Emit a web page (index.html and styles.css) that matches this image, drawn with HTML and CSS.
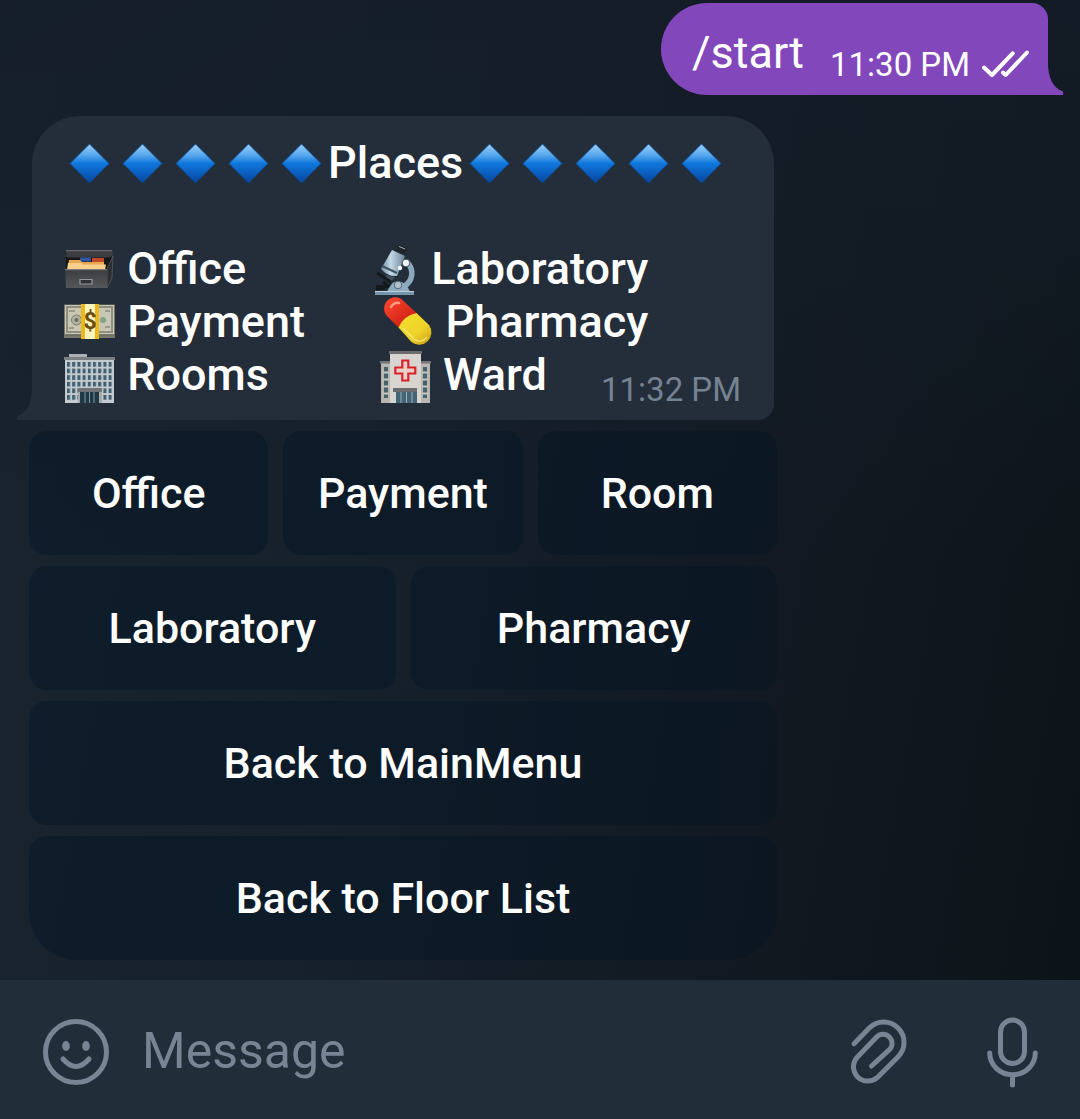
FILE: index.html
```html
<!DOCTYPE html>
<html lang="en">
<head>
<meta charset="utf-8">
<meta name="viewport" content="width=device-width, initial-scale=1">
<title>Chat</title>
<link rel="stylesheet" href="styles.css">
</head>
<body>
<svg class="sprite" aria-hidden="true">
  <defs>
    <linearGradient id="blue" x1="0" y1="0" x2="0" y2="1">
      <stop offset="0" stop-color="#9ad0fb"/><stop offset=".28" stop-color="#5aa9ee"/><stop offset=".5" stop-color="#0f77dc"/><stop offset="1" stop-color="#0745a0"/>
    </linearGradient>
    <linearGradient id="red" x1="0" y1="0" x2="1" y2="1">
      <stop offset="0" stop-color="#ff4a30"/><stop offset="1" stop-color="#c4160f"/>
    </linearGradient>
    <linearGradient id="yellow" x1="0" y1="0" x2="1" y2="1">
      <stop offset="0" stop-color="#f4e02c"/><stop offset=".6" stop-color="#eed32a"/><stop offset="1" stop-color="#c99a12"/>
    </linearGradient>
    <linearGradient id="steel" x1="0" y1="0" x2="1" y2="0">
      <stop offset="0" stop-color="#6d8aa0"/><stop offset=".4" stop-color="#c4d9e7"/><stop offset="1" stop-color="#6a8496"/>
    </linearGradient>
    <linearGradient id="box" x1="0" y1="0" x2="0" y2="1">
      <stop offset="0" stop-color="#3b3c40"/><stop offset="1" stop-color="#56575b"/>
    </linearGradient>
    <pattern id="windows" x="4" y="14" width="5.2" height="6.6" patternUnits="userSpaceOnUse">
      <rect width="3" height="4.7" fill="#41606f"/>
    </pattern>
    <symbol id="diamond" viewBox="0 0 53 53">
      <path d="M26.5 8 46 27.5 26.5 47 7 27.5z" fill="url(#blue)" stroke="#0b4a90" stroke-width=".8"/>
    </symbol>
  </defs>
</svg>

<main class="conversation">
  <article class="bubble outgoing">
    <span>/start</span>
    <time class="time">11:30 PM</time>
    <svg class="checks" viewBox="0 0 48 30" role="img" aria-label="Read"><path d="M3 18.5 11 26 31.700 4.300M22 23.500l2.700 2.500L46 3.500"/></svg>
    <svg class="tail" viewBox="0 0 17 32" aria-hidden="true"><path d="M0 0h1C1 14 6 25 15 28Q17 29 16 32H0z"/></svg>
  </article>

  <article class="bubble incoming">
    <svg class="tail" viewBox="0 0 17 32" aria-hidden="true"><path d="M17 0h-1C16 14 11 25 2 28Q0 29 1 32H17z"/></svg>
    <h1 class="line title"><svg class="emoji"><use href="#diamond"/></svg><svg class="emoji"><use href="#diamond"/></svg><svg class="emoji"><use href="#diamond"/></svg><svg class="emoji"><use href="#diamond"/></svg><svg class="emoji"><use href="#diamond"/></svg>Places<svg class="emoji"><use href="#diamond"/></svg><svg class="emoji"><use href="#diamond"/></svg><svg class="emoji"><use href="#diamond"/></svg><svg class="emoji"><use href="#diamond"/></svg><svg class="emoji"><use href="#diamond"/></svg></h1>
    <p class="line"><svg class="emoji" viewBox="0 0 53 53" aria-hidden="true">
        <path d="M3 15h46l-3 13H3z" fill="#141618"/>
        <path d="M3 8h46l1 5-4 2.500H4z" fill="#3c3d41"/><path d="M3 8h46l.5 1.200H3z" fill="#66686b"/>
        <path d="M17 15.500h11v4H17z" fill="#3255a4"/><path d="M29 16h12v4H29z" fill="#c4482a"/>
        <path d="M6 18h11l2 2h22v4H5z" fill="#e8a850"/><path d="M5 21h13l2 1.500h23l-1 5H4z" fill="#fbd08c"/>
        <path d="M44 27 50 14l-1 22-5 10z" fill="#2c2e31" stroke="#5f6165" stroke-width=".7"/><path d="M2 27h42v19H3z" fill="url(#box)"/><path d="M2 27h42v1.200H2z" fill="#77797c"/>
        <path d="M17 37.500h12v4.500H17z" fill="#303235" stroke="#97989b" stroke-width="1.200"/>
      </svg> Office           <svg class="emoji second" viewBox="0 0 53 53" aria-hidden="true">
        <path d="M40 20c7 7 7 19-4 25" fill="none" stroke="#8ca9bc" stroke-width="5.500"/>
        <path d="M31 2.500 40 6 38 12 29 9z" fill="#1e2429"/><path d="m32 4.500 6 2.500" stroke="#a5b0b8"/>
        <path d="m25 8 13 6-8 20q-9 1-16-7z" fill="url(#steel)"/><path d="m15 24 15 7" stroke="#3f5462" stroke-width="2"/>
        <path d="m19 33 9 2-4 5-7-3z" fill="#3e505d"/>
        <path d="m10 31 14 9M9 45l13-1-6-4M9 47l10-1" fill="none" stroke="#15191c" stroke-width="3"/>
        <circle cx="39" cy="21" r="3.800" fill="#f4f8fa" stroke="#40525f"/><circle cx="33" cy="26" r="2.200" fill="#f4f8fa"/>
        <path d="M20 50q3-7 7-10h8q6 4 8 10z" fill="#8fadc1"/><circle cx="31" cy="43" r="3.800" fill="#b0bfc8" stroke="#526878"/>
        <path d="M8 49h39v4H8z" fill="#7595ab"/><path d="M8 49h39v1H8z" fill="#bed1dd"/>
      </svg> Laboratory</p>
    <p class="line"><svg class="emoji" viewBox="0 0 53 53" aria-hidden="true">
        <path d="M1 9.500h51V43H1z" fill="#77776b"/><path d="M2 10h49v29H2z" fill="#c9c7b4"/>
        <path d="M4 12h45v25H4z" fill="none" stroke="#8e8f80" stroke-width="2"/>
        <circle cx="13.500" cy="25" r="5" fill="#b1b29f" stroke="#7c7f6e"/><circle cx="13.500" cy="25" r="2" fill="#636c60"/>
        <circle cx="40" cy="25" r="3" fill="#7fa387"/><path d="M42 32h5M6 16h6M42 16h5M6 33h5M1 40.500h51" stroke="#6d7065"/>
        <path d="M18 9h18v35H18z" fill="#ebb91c"/><path d="M22 9h10v35H22z" fill="#fff3bd"/>
        <text x="27" y="34" class="currency">$</text>
      </svg> Payment       <svg class="emoji second" viewBox="0 0 53 53" aria-hidden="true">
        <path d="M17.500 32.500 6.500 21.500A11 11 0 0 1 22 5.500L35.500 18z" fill="url(#red)"/>
        <path d="M35.500 18 48 30A12.300 12.300 0 0 1 30.500 47L17.500 32.500Q22 21 35.500 18z" fill="url(#yellow)"/>
        <path d="M10 12q3-5 8-4" fill="none" stroke="#ff9a82" stroke-width="2.500" stroke-linecap="round"/>
        <path d="m22 33 11 11q7 5 13-2" fill="none" stroke="#fff0a0" stroke-width="1.300" opacity=".7"/>
      </svg> Pharmacy</p>
    <div class="last-row">
      <p class="line"><svg class="emoji" viewBox="0 0 53 53" aria-hidden="true">
        <path d="M6 6h18v4H6z" fill="#adb1b4"/><path d="M2 11h49v44H2z" fill="#c4cbd0"/><path d="M1 9h51v3H1z" fill="#7c7f83"/>
        <path d="M4 14h45.500v38H4z" fill="url(#windows)"/>
        <path d="M15 41h24v14H15z" fill="#a4a9ac"/><path d="M15 40h24v4H15z" fill="#6f7375"/><path d="M17 44h19v11H17z" fill="#1e3846"/><path d="M22 44v11M26.500 44v11M31 44v11" stroke="#80969f"/>
      </svg> Rooms          <svg class="emoji second" viewBox="0 0 53 53" aria-hidden="true">
        <path d="M2 14h49v41H2z" fill="#b9b6b1"/><path d="M1 13h51v2.500H1z" fill="#737475"/>
        <path d="M5 19h4v31H5zM44 19h4v31h-4z" fill="#48626e"/><path d="M4 24.500h6m-6 7h6m-6 7h6m-6 7h6m33-21h6m-6 7h6m-6 7h6m-6 7h6" stroke="#c9c6c1" stroke-width="2"/>
        <path d="M11 5h31v50H11z" fill="#d8d5d0"/><path d="M10 3h33v3H10z" fill="#6b6c6e"/>
        <path d="M23.300 12.500h6v7h7v6h-7v7h-6v-7h-7v-6h7z" fill="#eccfcb" stroke="#d8232b" stroke-width="2.200"/>
        <path d="M14 40h24v4H14z" fill="#6a6b6c"/><path d="M17 44h21v11H17z" fill="#416577"/><path d="M22 44v11M27.500 44v11M33 44v11" stroke="#9cb0b8"/>
      </svg> Ward</p>
      <time class="time">11:32 PM</time>
    </div>
  </article>

  <div class="keyboard">
    <div class="keys"><button type="button">Office</button><button type="button">Payment</button><button type="button">Room</button></div>
    <div class="keys"><button type="button">Laboratory</button><button type="button">Pharmacy</button></div>
    <div class="keys"><button type="button">Back to MainMenu</button></div>
    <div class="keys"><button type="button">Back to Floor List</button></div>
  </div>
</main>

<form class="composer">
  <button type="button" aria-label="Emoji"><svg width="68" height="68" viewBox="0 0 68 68"><circle cx="34" cy="34" r="30.500"/><path d="M21 41q13 15 26 0"/><ellipse class="eye" cx="24" cy="28" rx="3.800" ry="5"/><ellipse class="eye" cx="44" cy="28" rx="3.800" ry="5"/></svg></button>
  <input type="text" aria-label="Message" placeholder="Message">
  <button type="button" aria-label="Attach"><svg width="68" height="72" viewBox="0 0 68 72"><path d="M10 27.700 25.300 12A20.300 20.300 0 0 1 54.100 40.700L33.400 61.400A14.300 14.300 0 0 1 13.200 41.200L32.600 21A9 9 0 0 1 45.400 33.700L27.500 50"/></svg></button>
  <button type="button" aria-label="Record voice message"><svg width="70" height="78" viewBox="0 0 70 78"><rect x="22.500" y="7" width="24" height="43.500" rx="12"/><path d="M11.700 40a22.800 21.700 0 0 0 45.600 0M34.500 61.700V72"/></svg></button>
</form>
</body>
</html>
```
FILE: styles.css
```css
* {
  box-sizing: border-box;
}

body {
  margin: 0;
  min-height: 100vh;
  display: flex;
  flex-direction: column;
  font-family: Roboto, "Liberation Sans", sans-serif;
  color: #fff;
  background:
    linear-gradient(to bottom, rgba(20, 29, 40, .8), rgba(20, 29, 40, 0) 50%),
    linear-gradient(100deg, #19242f 0%, #16212c 35%, #121922 68%, #0c1318 100%);
}

button,
input {
  font: inherit;
  color: inherit;
  border: 0;
  padding: 0;
  background: none;
}

.sprite {
  position: absolute;
  width: 0;
  height: 0;
}

.conversation {
  flex: 1;
  display: flex;
  flex-direction: column;
  align-items: flex-start;
  padding: 3px 32px 20px;
}

.bubble {
  position: relative;
  font-size: 45px;
  line-height: 53px;
}

.tail {
  position: absolute;
  bottom: 0;
  width: 17px;
  height: 32px;
}

.time {
  font-size: 33px;
  line-height: 40px;
}

.outgoing {
  align-self: flex-end;
  display: flex;
  align-items: flex-end;
  padding: 23px 19px 16px 31px;
  border-radius: 46px 16px 0 46px;
  background: #8147bb;
}

.outgoing .tail {
  right: -16px;
  fill: #8147bb;
}

.outgoing .time {
  margin: 0 11px -6px 26px;
}

.checks {
  width: 48px;
  height: 30px;
  fill: none;
  stroke: #fff;
  stroke-width: 4;
  stroke-linecap: round;
  stroke-linejoin: round;
}

.incoming {
  width: 742px;
  max-width: 100%;
  margin-top: 21px;
  padding: 20px 33px 19px 31px;
  border-radius: 48px 48px 16px 0;
  background: #232e3a;
}

.incoming .tail {
  left: -16px;
  fill: #232e3a;
}

.line {
  margin: 0;
  font-size: 45px;
  font-weight: 500;
  white-space: pre;
}

.title {
  margin-bottom: 53px;
}

.emoji {
  width: 53px;
  height: 53px;
  vertical-align: top;
  overflow: visible;
}

.emoji.second {
  margin-left: -2px;
}

.currency {
  font-size: 23px;
  font-weight: 700;
  text-anchor: middle;
  fill: #6b4c10;
}

.last-row {
  display: flex;
  justify-content: space-between;
  align-items: flex-end;
}

.incoming .time {
  margin-bottom: -9px;
  color: #758292;
}

.keyboard {
  display: grid;
  gap: 11px;
  width: 748px;
  max-width: 100%;
  margin: 11px 0 0 -3px;
}

.keys {
  display: flex;
  gap: 15px;
}

.keys button {
  flex: 1 1 0;
  height: 124px;
  border-radius: 18px;
  background: linear-gradient(to right, rgba(5, 22, 40, .5), rgba(5, 20, 32, .5)) fixed;
  font-size: 43px;
  font-weight: 500;
}

.keys:last-child button {
  border-radius: 18px 18px 48px 48px;
}

.composer {
  display: flex;
  align-items: center;
  height: 139px;
  padding: 4px 32px 0 42px;
  background: #222d3a;
  color: #768494;
}

.composer input {
  flex: 1;
  min-width: 0;
  margin: 0 32px;
  padding-bottom: 2px;
  font-size: 50px;
  outline: 0;
}

.composer input::placeholder {
  color: #768494;
  opacity: 1;
}

.composer button + button {
  margin-left: 66px;
}

.composer svg {
  display: block;
  fill: none;
  stroke: currentColor;
  stroke-width: 5;
  stroke-linecap: round;
  stroke-linejoin: round;
}

.composer .eye {
  fill: currentColor;
  stroke: none;
}
```
